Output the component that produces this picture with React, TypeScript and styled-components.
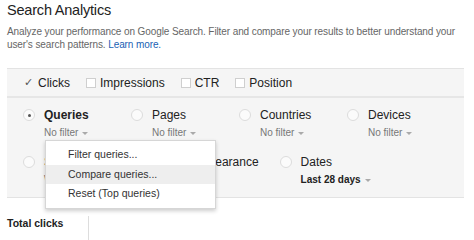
import React from 'react';
import styled, { createGlobalStyle } from 'styled-components';

const GlobalStyle = createGlobalStyle`
  body {
    margin: 0;
    background: #ffffff;
    font-family: "Liberation Sans", Arial, sans-serif;
    color: #222222;
  }
`;

const metrics = [
  { label: 'Clicks', checked: true },
  { label: 'Impressions', checked: false },
  { label: 'CTR', checked: false },
  { label: 'Position', checked: false },
];

const dimensions = [
  { label: 'Queries', filter: 'No filter', selected: true },
  { label: 'Pages', filter: 'No filter' },
  { label: 'Countries', filter: 'No filter' },
  { label: 'Devices', filter: 'No filter' },
  { label: 'Search Type', filter: 'Web' },
  { label: 'Search Appearance', filter: 'No filter' },
  { label: 'Dates', filter: 'Last 28 days', strong: true },
];

const menuItems = ['Filter queries...', 'Compare queries...', 'Reset (Top queries)'];

const App: React.FC = () => {
  return (
    <>
      <GlobalStyle />
      <Page>
        <Title>Search Analytics</Title>
        <Description>
          Analyze your performance on Google Search. Filter and compare your results to better understand your
          user's search patterns. <Link>Learn more.</Link>
        </Description>

        <Panel>
          <MetricRow>
            {metrics.map((m) => (
              <Metric key={m.label}>
                {m.checked ? <Check>✓</Check> : <Box />}
                {m.label}
              </Metric>
            ))}
          </MetricRow>

          <DimensionGrid>
            {dimensions.map((d) => (
              <Dimension key={d.label}>
                <Radio $selected={d.selected} />
                <DimensionText>
                  <DimensionLabel $selected={d.selected}>{d.label}</DimensionLabel>
                  <FilterLabel $strong={d.strong}>
                    {d.filter} <Caret />
                  </FilterLabel>
                </DimensionText>
              </Dimension>
            ))}
          </DimensionGrid>

          <Menu>
            {menuItems.map((item, i) => (
              <MenuItem key={item} $active={i === 1}>
                {item}
              </MenuItem>
            ))}
          </Menu>
        </Panel>

        <Summary>
          <SummaryCell>Total clicks</SummaryCell>
          <SummaryDivider />
        </Summary>
      </Page>
    </>
  );
};

export default App;

// Styled Components
const Page = styled.div`
  padding: 0 10px 0 7px;
`;

const Title = styled.h1`
  margin: 0;
  font-size: 14.5px;
  font-weight: normal;
  line-height: 20px;
  letter-spacing: -0.2px;
  color: #222222;
`;

const Description = styled.p`
  margin: 5px 0 0;
  max-width: 450px;
  font-size: 10px;
  line-height: 13px;
  color: #666666;
  letter-spacing: -0.1px;
`;

const Link = styled.a`
  color: #1a5fb4;
  cursor: pointer;
`;

const Panel = styled.div`
  position: relative;
  margin-top: 17px;
  background: #f5f5f5;
  border-top: 1px solid #e3e3e3;
  border-bottom: 1px solid #e3e3e3;
`;

const MetricRow = styled.div`
  display: flex;
  align-items: center;
  height: 29px;
  padding-left: 17px;
  gap: 16px;
  border-bottom: 2px solid #e6e6e6;
  box-sizing: border-box;
`;

const Metric = styled.div`
  display: flex;
  align-items: center;
  gap: 4px;
  font-size: 12px;
  color: #222222;
`;

const Check = styled.span`
  font-size: 11px;
  color: #555555;
  width: 10px;
`;

const Box = styled.span`
  width: 10px;
  height: 10px;
  border: 1px solid #cfcfcf;
  background: #ffffff;
  box-sizing: border-box;
`;

const DimensionGrid = styled.div`
  display: flex;
  flex-wrap: wrap;
  padding: 8px 0 9px 15px;
  row-gap: 12px;
`;

const Dimension = styled.div`
  display: flex;
  align-items: flex-start;
  min-width: 108px;
  padding-right: 20px;
  box-sizing: border-box;
`;

const Radio = styled.span<{ $selected?: boolean }>`
  position: relative;
  flex: none;
  width: 12px;
  height: 12px;
  margin: 3px 9px 0 1px;
  border-radius: 50%;
  border: 1px solid #dcdcdc;
  background: #fbfbfb;
  box-sizing: border-box;
  &::after {
    content: '';
    display: ${(p) => (p.$selected ? 'block' : 'none')};
    position: absolute;
    left: 3.5px;
    top: 3.5px;
    width: 3px;
    height: 3px;
    border-radius: 50%;
    background: #555555;
  }
`;

const DimensionText = styled.div`
  display: flex;
  flex-direction: column;
`;

const DimensionLabel = styled.span<{ $selected?: boolean }>`
  font-size: 12px;
  line-height: 18px;
  font-weight: ${(p) => (p.$selected ? 'bold' : 'normal')};
  color: #222222;
  white-space: nowrap;
`;

const FilterLabel = styled.span<{ $strong?: boolean }>`
  display: flex;
  align-items: center;
  gap: 4px;
  margin-top: 1px;
  font-size: 10px;
  line-height: 16px;
  font-weight: ${(p) => (p.$strong ? 'bold' : 'normal')};
  color: ${(p) => (p.$strong ? '#222222' : '#777777')};
  white-space: nowrap;
`;

const Caret = styled.span`
  width: 0;
  height: 0;
  border-left: 3px solid transparent;
  border-right: 3px solid transparent;
  border-top: 3px solid #aaaaaa;
  margin-top: 1px;
`;

const Menu = styled.div`
  position: absolute;
  left: 38px;
  top: 71px;
  width: 171px;
  padding: 4px 0;
  background: #ffffff;
  border: 1px solid #d6d6d6;
  box-shadow: 0 2px 4px rgba(0, 0, 0, 0.2);
  box-sizing: border-box;
`;

const MenuItem = styled.div<{ $active?: boolean }>`
  height: 19.5px;
  line-height: 19.5px;
  padding-left: 22px;
  font-size: 10.5px;
  color: #333333;
  background: ${(p) => (p.$active ? '#eeeeee' : 'transparent')};
`;

const Summary = styled.div`
  display: flex;
  margin-top: 18px;
  height: 24px;
`;

const SummaryCell = styled.div`
  width: 81px;
  padding-top: 1px;
  line-height: 12px;
  font-size: 10.5px;
  font-weight: bold;
  color: #222222;
`;

const SummaryDivider = styled.div`
  width: 1px;
  background: #dddddd;
`;
